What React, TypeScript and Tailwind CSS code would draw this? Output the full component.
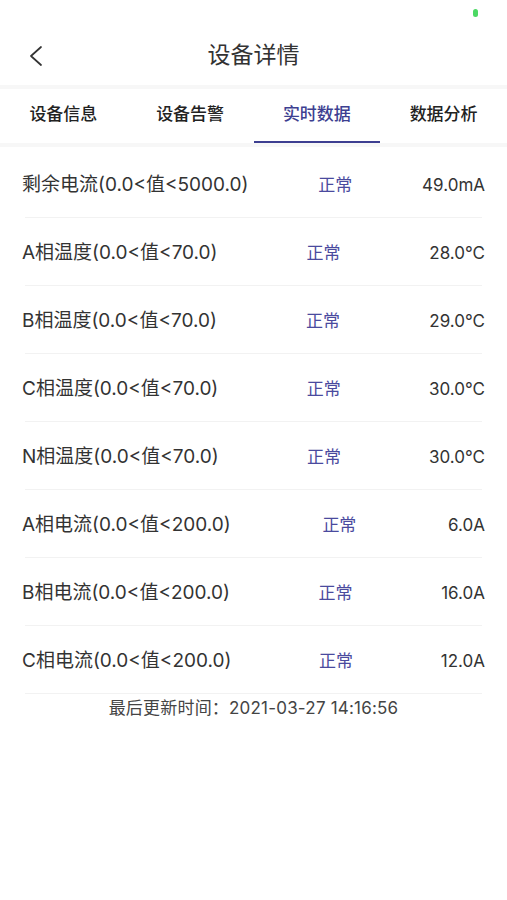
const tabs = ['设备信息', '设备告警', '实时数据', '数据分析']

const rows = [
  { label: '剩余电流(0.0<值<5000.0)', status: '正常', value: '49.0mA' },
  { label: 'A相温度(0.0<值<70.0)', status: '正常', value: '28.0°C' },
  { label: 'B相温度(0.0<值<70.0)', status: '正常', value: '29.0°C' },
  { label: 'C相温度(0.0<值<70.0)', status: '正常', value: '30.0°C' },
  { label: 'N相温度(0.0<值<70.0)', status: '正常', value: '30.0°C' },
  { label: 'A相电流(0.0<值<200.0)', status: '正常', value: '6.0A' },
  { label: 'B相电流(0.0<值<200.0)', status: '正常', value: '16.0A' },
  { label: 'C相电流(0.0<值<200.0)', status: '正常', value: '12.0A' },
]

export default function App() {
  const active = 2

  return (
    <div className="min-h-[900px] w-full bg-white font-['Inter','Noto_Sans_CJK_SC',sans-serif] text-[#333]">
      {/* status bar */}
      <div className="flex h-6 justify-end pr-[29px] pt-[9px]">
        <div className="h-2 w-[5px] rounded-sm bg-[#4cd964]" />
      </div>

      {/* nav bar */}
      <div className="grid h-[61px] grid-cols-[1fr_auto_1fr] items-center">
        <div className="pl-[29px] pt-[2px]">
          <svg width="14" height="20" viewBox="0 0 14 20" fill="none">
            <path d="M12 1 L2 10 L12 19" stroke="#333" strokeWidth="1.7" strokeLinecap="round" strokeLinejoin="round" />
          </svg>
        </div>
        <h1 className="pt-[2px] text-[23px] leading-none text-[#333]">设备详情</h1>
        <div />
      </div>
      <div className="h-1 bg-[#f7f7f7]" />

      {/* tabs */}
      <div className="grid grid-cols-4">
        {tabs.map((t, i) => (
          <div key={t} className="flex h-[54px] flex-col items-center">
            <div
              className={`flex-1 pt-[13px] text-[17px] leading-6 font-medium ${
                i === active ? 'text-[#3d3f91]' : 'text-[#222]'
              }`}
            >
              {t}
            </div>
            <div className={`h-[2px] w-full ${i === active ? 'bg-[#3d3f91]' : 'bg-transparent'}`} />
          </div>
        ))}
      </div>
      <div className="h-1 bg-[#f7f7f7]" />

      {/* realtime data list */}
      <div className="pt-[3px]">
        {rows.map((r) => (
          <div key={r.label}>
            <div className="flex h-[67px] items-center justify-between px-[22px] pt-1">
              <span className="text-[19px]">{r.label}</span>
              <span className="text-[17px] text-[#4a4a9e]">{r.status}</span>
              <span className="text-[17px]">{r.value}</span>
            </div>
            <div className="mx-[25px] h-px bg-[#f2f2f2]" />
          </div>
        ))}
      </div>

      <p className="pt-[2px] text-center text-[17px] leading-6 tracking-[0.2px] text-[#444]">
        最后更新时间：2021-03-27 14:16:56
      </p>
    </div>
  )
}
